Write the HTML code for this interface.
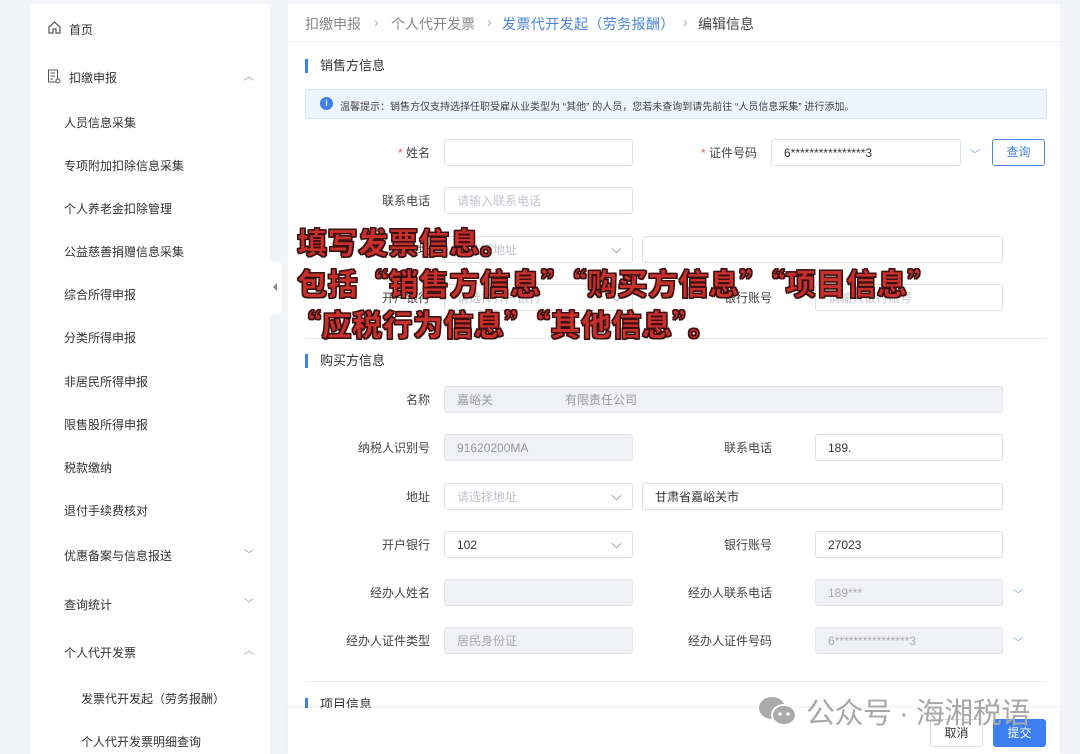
<!DOCTYPE html><html><head><meta charset="utf-8"><style>
*{margin:0;padding:0;box-sizing:border-box}
body{width:1080px;height:754px;overflow:hidden;background:#f3f4f7;font-family:"Liberation Sans","Noto Sans CJK SC",sans-serif;position:relative;color:#333}
.a{position:absolute}
.side{left:30px;top:4px;width:240px;height:750px;background:#fff}
.si{position:absolute;left:64px;font-size:12px;color:#333}
.chev{position:absolute;left:244px;font-size:10px;color:#999}
.main{left:288px;top:4px;width:772px;height:750px;background:#fff}
.lbl{position:absolute;font-size:12px;color:#444;text-align:right}
.in{position:absolute;height:27px;border:1px solid #dcdfe6;border-radius:3px;background:#fff;font-size:12px;color:#c0c4cc;padding:6px 12px;line-height:14px}
.dis{background:#f0f1f4;border-color:#e4e6eb}
.val{color:#333}
.dd::after{content:"";position:absolute;right:12px;top:8px;width:6px;height:6px;border-right:1px solid #aaa;border-bottom:1px solid #aaa;transform:rotate(45deg)}
.sec{position:absolute;left:305px;font-size:13px;color:#333;padding-left:12px;border-left:3px solid #3d7ff0;line-height:14px}
.red{position:absolute;left:297px;font-size:30px;font-weight:900;color:#c8302c;letter-spacing:0.5px;-webkit-text-stroke:1px #3a1010;text-shadow:1px 1px 0 #3a1010,-1px -1px 0 #3a1010,1px -1px 0 #3a1010,-1px 1px 0 #3a1010;font-family:"Noto Sans CJK SC",sans-serif;white-space:nowrap}
.sm{position:absolute;color:#6aa0e8;font-size:10px}
.star{color:#e55}
.bc{position:absolute;top:14px;font-size:14px;color:#888;white-space:nowrap}
</style></head><body>
<div class="a side"></div>
<svg class="a" style="left:47px;top:20px" width="15" height="15" viewBox="0 0 15 15"><path d="M2 7L7.5 2L13 7V13H9V9H6V13H2Z" fill="none" stroke="#555" stroke-width="1.2"/></svg>
<div class="si" style="left:69px;top:21px;font-size:12px">首页</div>
<svg class="a" style="left:47px;top:69px" width="14" height="15" viewBox="0 0 14 15"><rect x="1.5" y="1" width="9" height="12" fill="none" stroke="#555"/><path d="M3.5 4H8M3.5 7H8M3.5 10H6" stroke="#555"/><circle cx="11" cy="12" r="2" fill="#fff" stroke="#555"/></svg>
<div class="si" style="left:69px;top:69px">扣缴申报</div><div class="chev" style="top:68px">︿</div>
<div class="si" style="top:114px">人员信息采集</div>
<div class="si" style="top:157px">专项附加扣除信息采集</div>
<div class="si" style="top:200px">个人养老金扣除管理</div>
<div class="si" style="top:243px">公益慈善捐赠信息采集</div>
<div class="si" style="top:286px">综合所得申报</div>
<div class="si" style="top:329px">分类所得申报</div>
<div class="si" style="top:373px">非居民所得申报</div>
<div class="si" style="top:416px">限售股所得申报</div>
<div class="si" style="top:459px">税款缴纳</div>
<div class="si" style="top:502px">退付手续费核对</div>
<div class="si" style="top:547px">优惠备案与信息报送</div><div class="chev" style="top:546px">﹀</div>
<div class="si" style="top:596px">查询统计</div><div class="chev" style="top:595px">﹀</div>
<div class="si" style="top:644px">个人代开发票</div><div class="chev" style="top:642px">︿</div>
<div class="si" style="left:81px;top:690px">发票代开发起（劳务报酬）</div>
<div class="si" style="left:81px;top:733px">个人代开发票明细查询</div>
<div class="a" style="left:270px;top:262px;width:12px;height:52px;background:#fff;border-radius:0 4px 4px 0"></div>
<div class="a" style="left:273px;top:283px;width:0;height:0;border:4px solid transparent;border-right:4px solid #888;border-left:0"></div>

<div class="a main"></div>
<div class="a" style="left:288px;top:41px;width:772px;height:1px;background:#ebeef5"></div>
<div class="bc" style="left:305px">扣缴申报</div>
<div class="bc" style="left:374px;color:#aaa">›</div>
<div class="bc" style="left:391px">个人代开发票</div>
<div class="bc" style="left:487px;color:#aaa">›</div>
<div class="bc" style="left:502px;color:#4a86d8;letter-spacing:0.4px">发票代开发起（劳务报酬）</div>
<div class="bc" style="left:683px;color:#aaa">›</div>
<div class="bc" style="left:698px;color:#444">编辑信息</div>
<div class="sec" style="top:59px">销售方信息</div>
<div class="a" style="left:305px;top:89px;width:742px;height:30px;background:#ecf4fd;border:1px solid #d9e8f8;border-radius:3px"></div>
<div class="a" style="left:320px;top:97px;width:13px;height:13px;border-radius:50%;background:#3d7ff0;color:#fff;font-size:9px;text-align:center;line-height:13px;font-weight:bold">i</div>
<div class="a" style="left:340px;top:98px;font-size:10px;color:#444;white-space:nowrap">温馨提示：销售方仅支持选择任职受雇从业类型为 “其他” 的人员，您若未查询到请先前往 “人员信息采集” 进行添加。</div>

<div class="lbl" style="left:330px;width:100px;top:144px"><span class="star">* </span>姓名</div>
<div class="in" style="left:444px;top:139px;width:189px"></div>
<div class="lbl" style="left:657px;width:100px;top:144px"><span class="star">* </span>证件号码</div>
<div class="in val" style="left:771px;top:139px;width:190px">6****************3</div>
<div class="sm" style="left:970px;top:146px">﹀</div>
<div class="a" style="left:992px;top:139px;width:53px;height:27px;border:1px solid #4a86d8;border-radius:3px;color:#4a86d8;font-size:12px;text-align:center;line-height:25px">查询</div>
<div class="lbl" style="left:330px;width:100px;top:192px">联系电话</div>
<div class="in" style="left:444px;top:187px;width:189px">请输入联系电话</div>
<div class="lbl" style="left:330px;width:100px;top:241px">地址</div>
<div class="in dd" style="left:444px;top:236px;width:189px">请选择地址</div>
<div class="in" style="left:642px;top:236px;width:361px"></div>
<div class="lbl" style="left:330px;width:100px;top:289px">开户银行</div>
<div class="in dd" style="left:444px;top:284px;width:189px">请选择开户银行</div>
<div class="lbl" style="left:672px;width:100px;top:289px">银行账号</div>
<div class="in" style="left:815px;top:284px;width:188px">请输入银行账号</div>
<div class="a" style="left:305px;top:338px;width:742px;height:1px;background:#e8e8e8"></div>

<div class="sec" style="top:354px">购买方信息</div>
<div class="lbl" style="left:330px;width:100px;top:391px">名称</div>
<div class="in dis" style="left:444px;top:386px;width:559px;color:#999">嘉峪关　　　　　　有限责任公司</div>
<div class="lbl" style="left:330px;width:100px;top:439px">纳税人识别号</div>
<div class="in dis" style="left:444px;top:434px;width:189px;color:#999">91620200MA</div>
<div class="lbl" style="left:672px;width:100px;top:439px">联系电话</div>
<div class="in val" style="left:815px;top:434px;width:188px">189.</div>
<div class="lbl" style="left:330px;width:100px;top:488px">地址</div>
<div class="in dd" style="left:444px;top:483px;width:189px">请选择地址</div>
<div class="in val" style="left:642px;top:483px;width:361px">甘肃省嘉峪关市</div>
<div class="lbl" style="left:330px;width:100px;top:536px">开户银行</div>
<div class="in dd val" style="left:444px;top:531px;width:189px">102</div>
<div class="lbl" style="left:672px;width:100px;top:536px">银行账号</div>
<div class="in val" style="left:815px;top:531px;width:188px">27023</div>
<div class="lbl" style="left:330px;width:100px;top:584px">经办人姓名</div>
<div class="in dis" style="left:444px;top:579px;width:189px"></div>
<div class="lbl" style="left:672px;width:100px;top:584px">经办人联系电话</div>
<div class="in dis" style="left:815px;top:579px;width:188px;color:#aaa">189***</div>
<div class="sm" style="left:1013px;top:586px">﹀</div>
<div class="lbl" style="left:330px;width:100px;top:632px">经办人证件类型</div>
<div class="in dis" style="left:444px;top:627px;width:189px;color:#aaa">居民身份证</div>
<div class="lbl" style="left:672px;width:100px;top:632px">经办人证件号码</div>
<div class="in dis" style="left:815px;top:627px;width:188px;color:#aaa">6****************3</div>
<div class="sm" style="left:1013px;top:634px">﹀</div>
<div class="a" style="left:305px;top:681px;width:742px;height:1px;background:#e8e8e8"></div>
<div class="sec" style="top:698px">项目信息</div>
<div class="a" style="left:288px;top:708px;width:772px;height:46px;background:#fff;box-shadow:0 -2px 4px rgba(0,0,0,.05)"></div>
<div class="a" style="left:930px;top:719px;width:53px;height:28px;border:1px solid #ddd;border-radius:3px;font-size:12px;text-align:center;line-height:26px;background:#fff">取消</div>
<div class="a" style="left:993px;top:719px;width:53px;height:28px;background:#3d7ff0;border-radius:3px;color:#fff;font-size:12px;text-align:center;line-height:28px">提交</div>
<svg class="a" style="left:757px;top:694px" width="42" height="34" viewBox="0 0 42 34"><ellipse cx="15" cy="14" rx="13" ry="11" fill="#aaa"/><ellipse cx="27" cy="21" rx="12" ry="10" fill="#aaa" stroke="#fff" stroke-width="2"/><circle cx="23" cy="20" r="1.8" fill="#fff"/><circle cx="31" cy="20" r="1.8" fill="#fff"/></svg>
<div class="a" style="left:806px;top:690px;font-size:29px;color:#a8a8a8;white-space:nowrap;letter-spacing:-0.5px">公众号 · 海湘税语</div>
<div class="red" style="top:219px">填写发票信息。</div>
<div class="red" style="top:260px;letter-spacing:0.5px">包括“销售方信息”“购买方信息”“项目信息”</div>
<div class="red" style="top:301px;left:291px;letter-spacing:0.5px">“应税行为信息”“其他信息”。</div>
</body></html>
